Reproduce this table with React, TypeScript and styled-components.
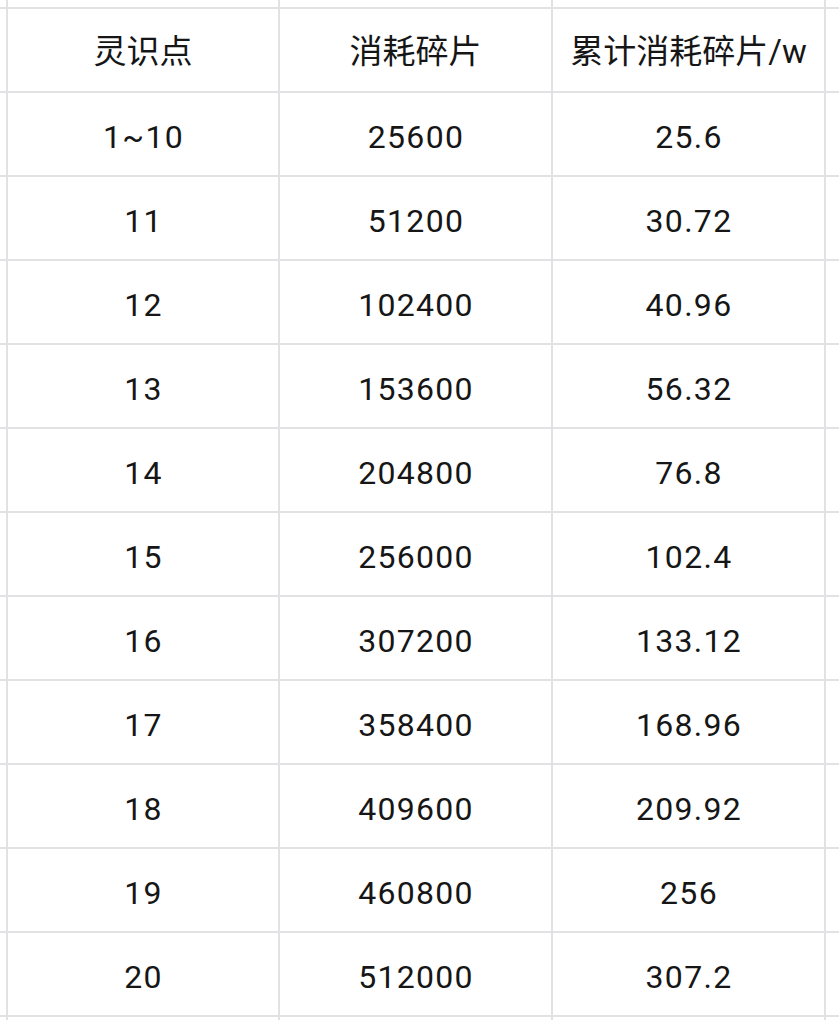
import React from 'react';
import styled, { createGlobalStyle } from 'styled-components';

const GlobalStyle = createGlobalStyle`
  html, body {
    margin: 0;
    padding: 0;
    background: #ffffff;
    overflow: hidden;
  }
  body {
    font-family: Roboto, "Noto Sans CJK SC", "Noto Sans", sans-serif;
  }
`;

const Sheet = styled.div`
  width: 839px;
  height: 1020px;
  overflow: hidden;
  background: #ffffff;
`;

const Grid = styled.div`
  display: grid;
  grid-template-columns: 6px 270px 271px 271px 40px;
  grid-auto-rows: 82px;
  grid-template-rows: 7px;
  gap: 2px;
  background: #e2e2e4;
  width: max-content;
`;

const Cell = styled.div<{ $header?: boolean }>`
  background: #ffffff;
  display: flex;
  align-items: center;
  justify-content: center;
  color: #161616;
  font-size: ${(p) => (p.$header ? '33px' : '32px')};
  font-family: Roboto, "Noto Sans CJK SC", sans-serif;
  letter-spacing: ${(p) => (p.$header ? '0' : '1.3px')};
  white-space: nowrap;
  padding: ${(p) => (p.$header ? '0 0 3px 0' : '5px 0 0 1px')};
  box-sizing: border-box;
`;

const Edge = styled.div`
  background: #ffffff;
`;

const header = ['灵识点', '消耗碎片', '累计消耗碎片/w'];

const rows: string[][] = [
  ['1~10', '25600', '25.6'],
  ['11', '51200', '30.72'],
  ['12', '102400', '40.96'],
  ['13', '153600', '56.32'],
  ['14', '204800', '76.8'],
  ['15', '256000', '102.4'],
  ['16', '307200', '133.12'],
  ['17', '358400', '168.96'],
  ['18', '409600', '209.92'],
  ['19', '460800', '256'],
  ['20', '512000', '307.2'],
];

export default function App() {
  return (
    <Sheet>
      <GlobalStyle />
      <Grid>
        {/* partial row above the header */}
        {[0, 1, 2, 3, 4].map((i) => (
          <Edge key={`top-${i}`} />
        ))}

        <Edge />
        {header.map((h) => (
          <Cell key={h} $header>
            {h}
          </Cell>
        ))}
        <Edge />

        {rows.map((r) => (
          <React.Fragment key={r[0]}>
            <Edge />
            {r.map((v, i) => (
              <Cell key={i}>{v}</Cell>
            ))}
            <Edge />
          </React.Fragment>
        ))}

        {[0, 1, 2, 3, 4].map((i) => (
          <Edge key={`bottom-${i}`} />
        ))}
      </Grid>
    </Sheet>
  );
}
